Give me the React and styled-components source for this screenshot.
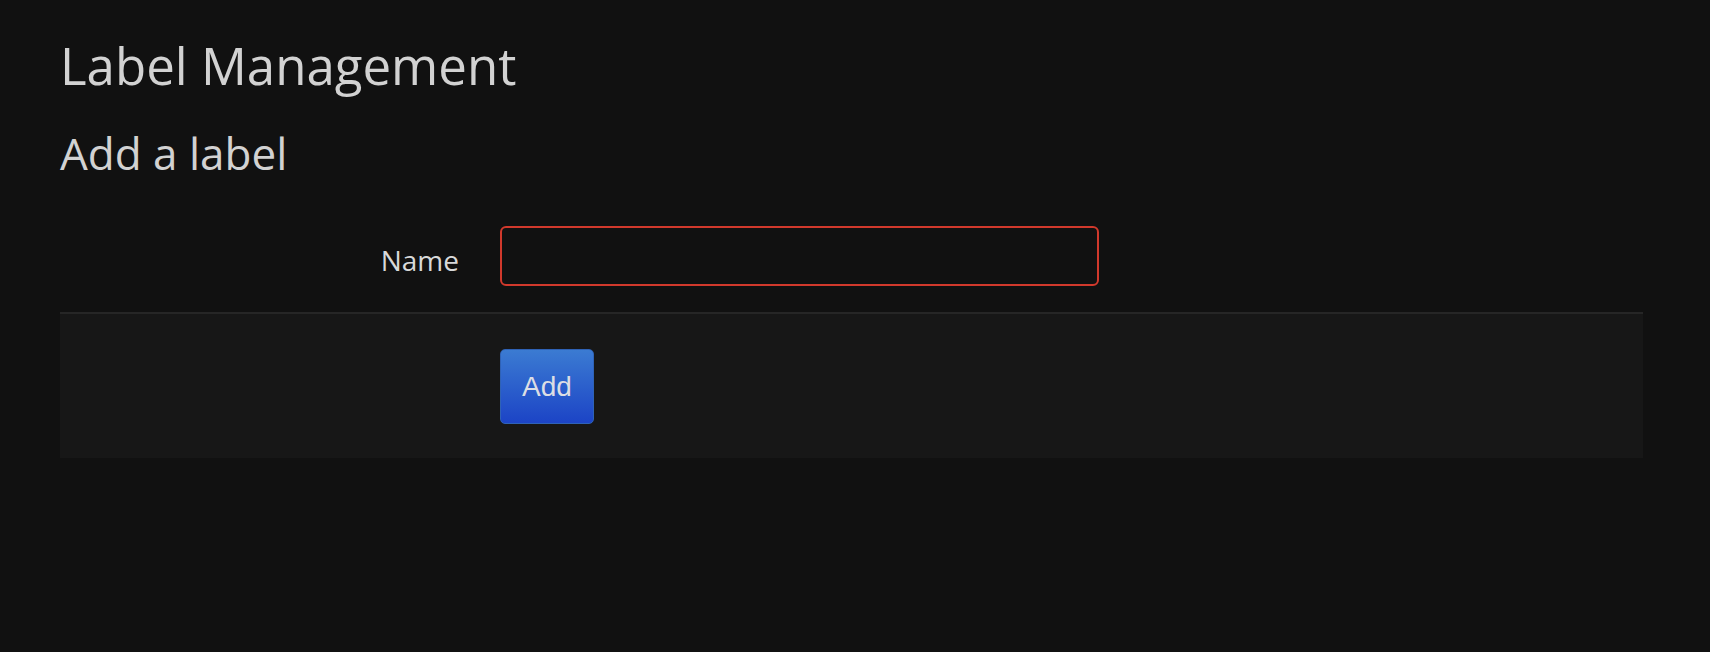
import React from "react";
import styled, { createGlobalStyle } from "styled-components";

const Global = createGlobalStyle`
  html, body {
    margin: 0;
    padding: 0;
    background: #111111;
  }
  body {
    font-family: "Open Sans", "Noto Sans", sans-serif;
    color: #d8d9da;
  }
`;

const Page = styled.div`
  padding: 37px 67px 40px 60px;
`;

const Title = styled.h1`
  margin: 0;
  font-size: 51px;
  line-height: 56px;
  font-weight: 500;
  color: #d2d2d2;
`;

const SubTitle = styled.h2`
  margin: 36px 0 0;
  font-size: 44px;
  line-height: 48px;
  font-weight: 500;
  color: #d2d2d2;
`;

const FormRow = styled.div`
  display: grid;
  grid-template-columns: 399px 599px;
  column-gap: 41px;
  margin-top: 49px;
`;

const Label = styled.label`
  text-align: right;
  font-size: 28px;
  padding-top: 15px;
  color: #d8d9da;
`;

const Input = styled.input`
  box-sizing: border-box;
  height: 60px;
  width: 599px;
  background: #111111;
  border: 2px solid #d1392c;
  border-radius: 6px;
  color: #d8d9da;
  font-size: 28px;
  padding: 0 14px;
  outline: none;
`;

const Footer = styled.div`
  margin-top: 26px;
  background: #171717;
  border-top: 2px solid #262626;
  padding: 35px 0 34px 440px;
  display: flex;
`;

const Button = styled.button`
  box-sizing: border-box;
  width: 94px;
  height: 75px;
  border: 1px solid #2f62b6;
  border-radius: 5px;
  background: linear-gradient(to bottom, #3b7bd2, #1c44c6);
  color: #dcdee4;
  font-family: "Liberation Sans", Arial, sans-serif;
  font-size: 28px;
  cursor: pointer;
`;

export default function App() {
  return (
    <>
      <Global />
      <Page>
        <Title>Label Management</Title>
        <SubTitle>Add a label</SubTitle>
        <FormRow>
          <Label htmlFor="name">Name</Label>
          <Input id="name" type="text" />
        </FormRow>
        <Footer>
          <Button type="button">Add</Button>
        </Footer>
      </Page>
    </>
  );
}
